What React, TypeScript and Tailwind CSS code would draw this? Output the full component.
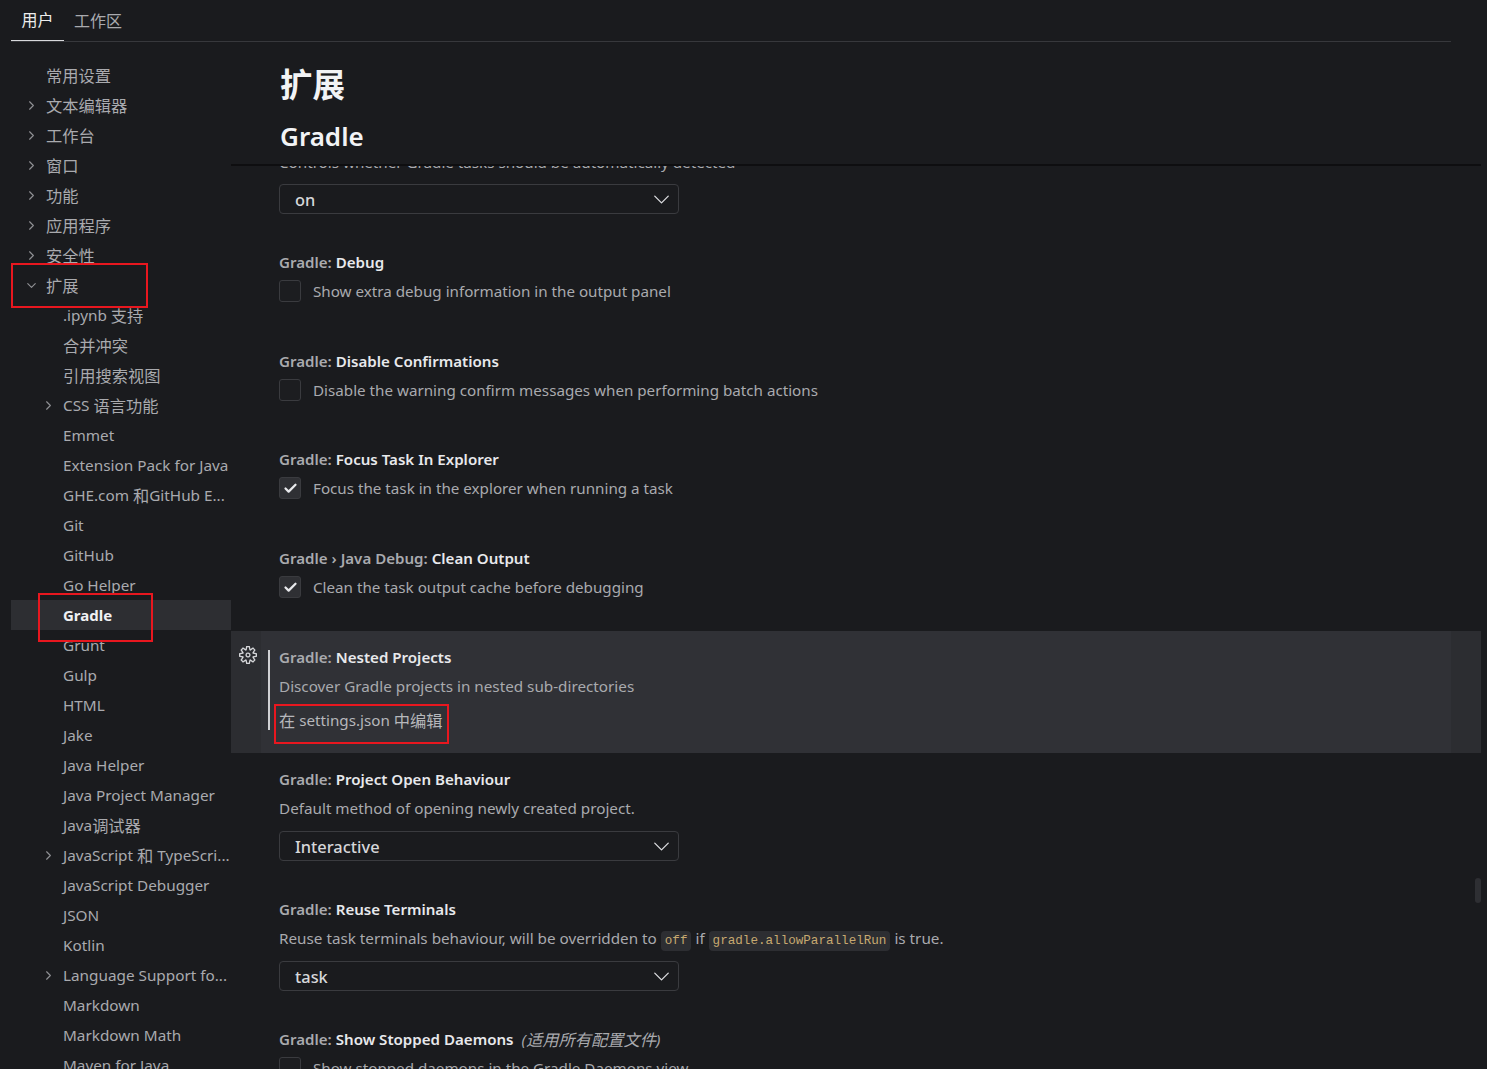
import React from "react";
import { ChevronRight, ChevronDown, Check } from "lucide-react";
import { VscSettingsGear } from "react-icons/vsc";

const FONT = '"Noto Sans", "Noto Sans CJK SC", sans-serif';

function T({ s }: { s: string }) {
  return (
    <>
      {s.split(/([\u4e00-\u9fff]+)/).map((p, i) =>
        /[\u4e00-\u9fff]/.test(p) ? (
          <span key={i} className="relative top-[1px] text-[16.25px]">
            {p}
          </span>
        ) : (
          <React.Fragment key={i}>{p}</React.Fragment>
        ),
      )}
    </>
  );
}

type NavItem = { t: string; lvl: 1 | 2; c?: "r" | "d"; sel?: boolean };
const nav: NavItem[] = [
  { t: "常用设置", lvl: 1 },
  { t: "文本编辑器", lvl: 1, c: "r" },
  { t: "工作台", lvl: 1, c: "r" },
  { t: "窗口", lvl: 1, c: "r" },
  { t: "功能", lvl: 1, c: "r" },
  { t: "应用程序", lvl: 1, c: "r" },
  { t: "安全性", lvl: 1, c: "r" },
  { t: "扩展", lvl: 1, c: "d" },
  { t: ".ipynb 支持", lvl: 2 },
  { t: "合并冲突", lvl: 2 },
  { t: "引用搜索视图", lvl: 2 },
  { t: "CSS 语言功能", lvl: 2, c: "r" },
  { t: "Emmet", lvl: 2 },
  { t: "Extension Pack for Java", lvl: 2 },
  { t: "GHE.com 和GitHub E...", lvl: 2 },
  { t: "Git", lvl: 2 },
  { t: "GitHub", lvl: 2 },
  { t: "Go Helper", lvl: 2 },
  { t: "Gradle", lvl: 2, sel: true },
  { t: "Grunt", lvl: 2 },
  { t: "Gulp", lvl: 2 },
  { t: "HTML", lvl: 2 },
  { t: "Jake", lvl: 2 },
  { t: "Java Helper", lvl: 2 },
  { t: "Java Project Manager", lvl: 2 },
  { t: "Java调试器", lvl: 2 },
  { t: "JavaScript 和 TypeScri...", lvl: 2, c: "r" },
  { t: "JavaScript Debugger", lvl: 2 },
  { t: "JSON", lvl: 2 },
  { t: "Kotlin", lvl: 2 },
  { t: "Language Support fo...", lvl: 2, c: "r" },
  { t: "Markdown", lvl: 2 },
  { t: "Markdown Math", lvl: 2 },
  { t: "Maven for Java", lvl: 2 },
];

function NavRow({ item }: { item: NavItem }) {
  const Icon = item.c === "d" ? ChevronDown : ChevronRight;
  return (
    <div
      className={`flex h-[30px] shrink-0 items-center whitespace-nowrap ${
        item.sel ? "bg-[#2d2e32] text-[15px] font-bold text-[#f0f1f3]" : "text-[15.3px] text-[#a9aaae]"
      }`}
    >
      <div className={`flex shrink-0 justify-center ${item.lvl === 1 ? "w-[35px] pl-[5px]" : "w-[52px] pl-[23px]"}`}>
        {item.c && <Icon size={15} strokeWidth={1.8} className="text-[#8f9094]" />}
      </div>
      <span>
        <T s={item.t} />
      </span>
    </div>
  );
}

function Title({ pre, name, extra }: { pre: string; name: string; extra?: string }) {
  return (
    <div className="flex h-[22px] -translate-y-[1px] items-center whitespace-pre text-[15.1px] font-semibold text-[#a9aaae]">
      <span>{pre} </span>
      <span className="text-[#e8e9ec]">{name}</span>
      {extra && (
        <span className="ml-[8px] font-normal italic text-[#a9aaae]">
          <T s={extra} />
        </span>
      )}
    </div>
  );
}

function CheckRow({ checked, text }: { checked?: boolean; text: string }) {
  return (
    <div className="mt-[7px] flex h-[22px] -translate-y-[1px] items-center whitespace-nowrap text-[15.2px] text-[#a9aaae]">
      <div
        className={`flex size-[22px] shrink-0 items-center justify-center rounded-[3px] border border-[#3a3b3f] ${
          checked ? "bg-[#2f3034]" : "bg-[#1c1d20]"
        }`}
      >
        {checked && <Check size={15} strokeWidth={3.6} className="text-[#e8e9ec]" />}
      </div>
      <span className="ml-[12px]">{text}</span>
    </div>
  );
}

function Select({ value, className = "" }: { value: string; className?: string }) {
  return (
    <div
      className={`flex h-[30px] w-[400px] items-center justify-between rounded-[4px] border border-[#3a3b3f] pl-[15px] pr-[3px] text-[16.4px] font-medium text-[#d6d7da] ${className}`}
    >
      <span className="translate-y-[1px]">{value}</span>
      <ChevronDown size={27} strokeWidth={1.15} className="text-[#dcdde0]" />
    </div>
  );
}

function Desc({ children }: { children: React.ReactNode }) {
  return (
    <div className="mt-[7px] flex h-[22px] -translate-y-[1px] items-center whitespace-pre text-[15.25px] text-[#a9aaae]">
      {children}
    </div>
  );
}

function Code({ children }: { children: React.ReactNode }) {
  return (
    <code className="translate-y-[3px] rounded-[4px] bg-[#2d2e32] px-[4px] py-[1px] text-[12.6px] text-[#c7a970] [font-family:'Liberation_Mono',monospace]">
      {children}
    </code>
  );
}

function Box({ rect }: { rect: string }) {
  return <div className={`pointer-events-none absolute border-2 border-[#e8171f] ${rect}`} />;
}

export default function App() {
  return (
    <div
      className="relative flex h-[1069px] w-full flex-col overflow-hidden bg-[#1a1b1e]"
      style={{ fontFamily: FONT }}
    >
      <div className="ml-[11px] mr-[36px] flex h-[42px] shrink-0 border-b border-[#37383c] text-[16px]">
        <div className="flex h-[41px] w-[53px] items-center justify-center border-b border-[#d8d9dc] text-[#eceded]">用户</div>
        <div className="flex h-[41px] items-center px-[10px] text-[#a9aaae]">工作区</div>
      </div>

      <div className="flex min-h-0 flex-1">
        <nav className="ml-[11px] mt-[18px] flex w-[220px] shrink-0 flex-col">
          {nav.map((n) => (
            <NavRow key={n.t} item={n} />
          ))}
        </nav>

        <main className="mr-[6px] flex min-w-0 flex-1 flex-col">
          <header className="relative z-10 h-[124px] shrink-0 border-b-2 border-[#0e0e10] bg-[#1a1b1e] pl-[49px]">
            <h1 className="mt-[21px] h-[44px] text-[32.5px] font-bold leading-[44px] text-[#f2f3f5]">扩展</h1>
            <h2 className="mt-[11px] text-[26px] font-semibold leading-[36px] text-[#f2f3f5]">Gradle</h2>
          </header>

          <div className="min-h-0 flex-1 overflow-hidden">
            <div className="pl-[48px]">
              <div className="-mt-[15px] h-[22px] whitespace-nowrap text-[15.2px] leading-[22px] text-[#a9aaae]">
                Controls whether Gradle tasks should be automatically detected
              </div>
              <Select value="on" className="mt-[11px]" />

              <div className="mt-[38px]">
                <Title pre="Gradle:" name="Debug" />
                <CheckRow text="Show extra debug information in the output panel" />
              </div>
              <div className="mt-[48px]">
                <Title pre="Gradle:" name="Disable Confirmations" />
                <CheckRow text="Disable the warning confirm messages when performing batch actions" />
              </div>
              <div className="mt-[47px]">
                <Title pre="Gradle:" name="Focus Task In Explorer" />
                <CheckRow checked text="Focus the task in the explorer when running a task" />
              </div>
              <div className="mt-[48px]">
                <Title pre="Gradle › Java Debug:" name="Clean Output" />
                <CheckRow checked text="Clean the task output cache before debugging" />
              </div>
            </div>

            <section className="mt-[32px] h-[122px] bg-[#2c2d31]">
              <div className="mx-[30px] flex h-full bg-[#303136]">
                <div className="relative ml-[7px] mt-[19px] h-[80px] w-[2px] bg-[#d0d1d4]">
                  <VscSettingsGear size={18} className="absolute -left-[29px] -top-[4px] text-[#d4d5d8]" />
                </div>
                <div className="ml-[9px] pt-[16px]">
                  <Title pre="Gradle:" name="Nested Projects" />
                  <Desc>Discover Gradle projects in nested sub-directories</Desc>
                  <div className="mt-[12px] flex h-[22px] -translate-y-[1px] items-center whitespace-pre text-[15.2px] text-[#b6b7bb]">
                    <span>
                      <T s="在 settings.json 中编辑" />
                    </span>
                  </div>
                </div>
              </div>
            </section>

            <div className="pl-[48px]">
              <div className="mt-[16px]">
                <Title pre="Gradle:" name="Project Open Behaviour" />
                <Desc>Default method of opening newly created project.</Desc>
                <Select value="Interactive" className="mt-[11px]" />
              </div>
              <div className="mt-[38px]">
                <Title pre="Gradle:" name="Reuse Terminals" />
                <Desc>
                  Reuse task terminals behaviour, will be overridden to <Code>off</Code> if <Code>gradle.allowParallelRun</Code> is true.
                </Desc>
                <Select value="task" className="mt-[11px]" />
              </div>
              <div className="mt-[38px]">
                <Title pre="Gradle:" name="Show Stopped Daemons" extra="(适用所有配置文件)" />
                <CheckRow text="Show stopped daemons in the Gradle Daemons view" />
              </div>
            </div>
          </div>
        </main>
      </div>

      <div className="absolute left-[1475px] top-[878px] h-[25px] w-[6px] rounded-full bg-[#2e2f33]" />
      <Box rect="left-[11px] top-[263px] h-[45px] w-[137px]" />
      <Box rect="left-[38px] top-[593px] h-[49px] w-[115px]" />
      <Box rect="left-[274px] top-[704px] h-[40px] w-[175px]" />
    </div>
  );
}
